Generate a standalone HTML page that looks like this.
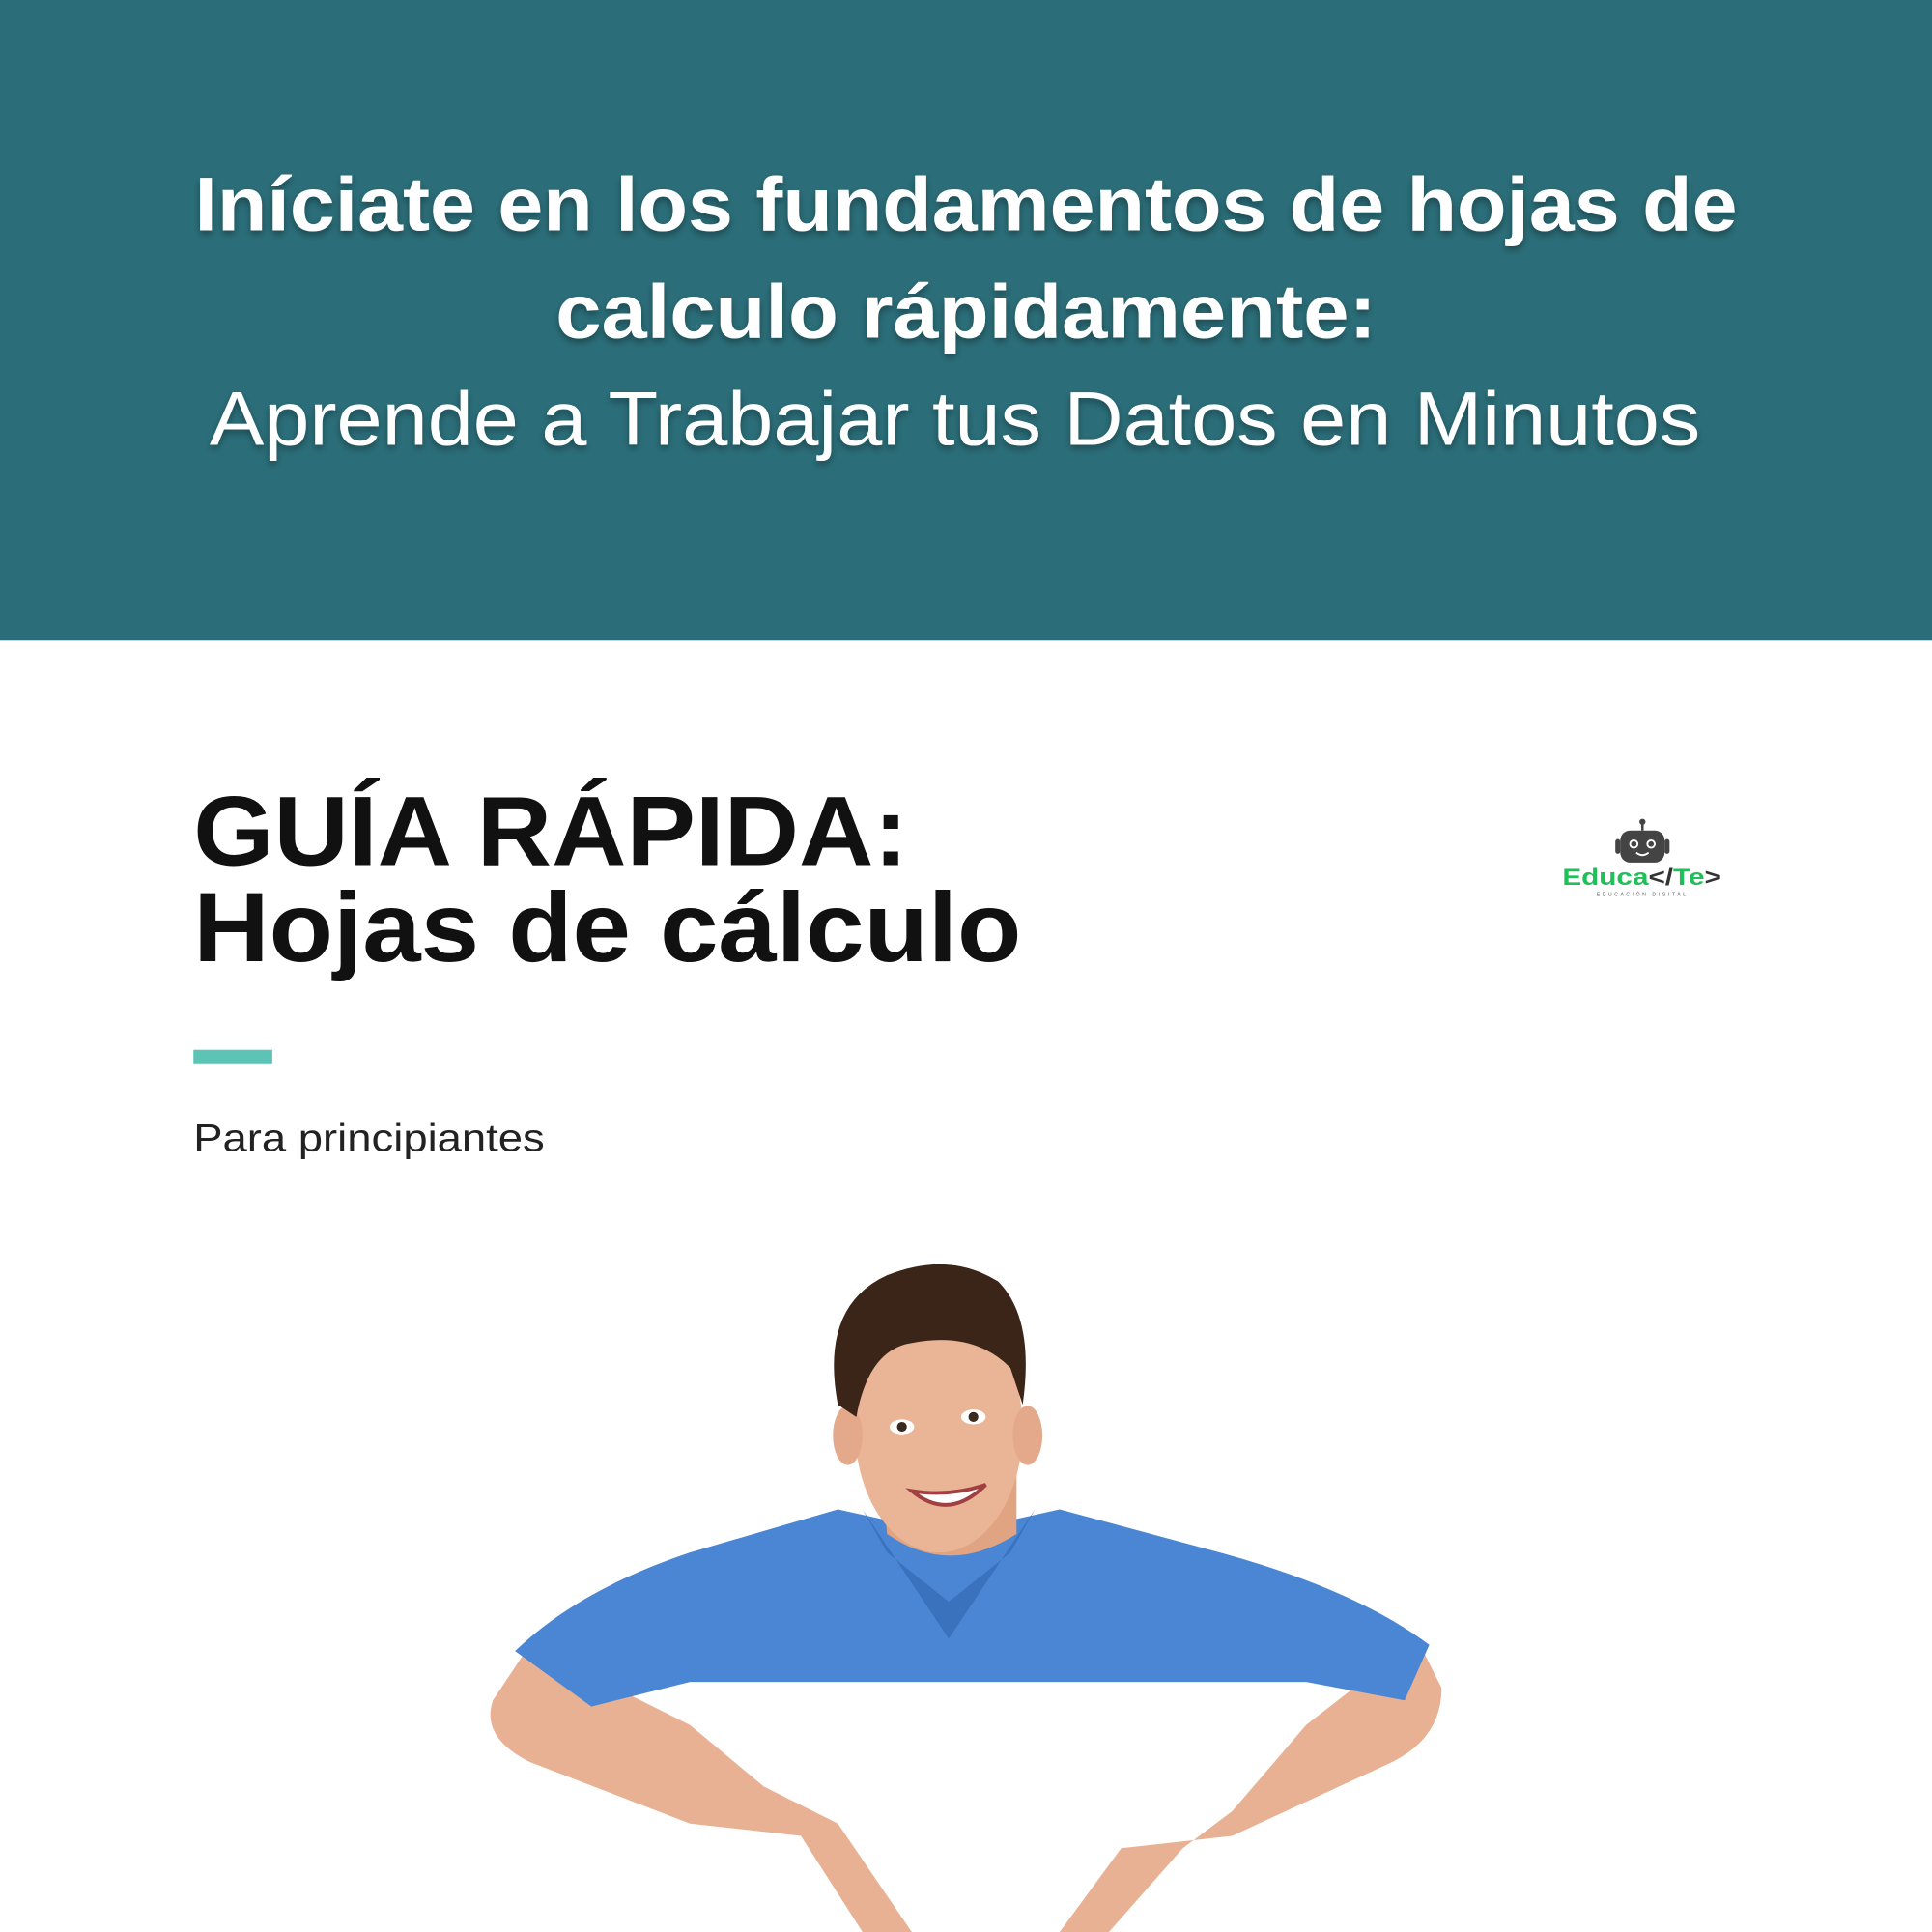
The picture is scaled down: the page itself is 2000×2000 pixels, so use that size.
<!DOCTYPE html>
<html><head><meta charset="utf-8"><style>
html,body{margin:0;padding:0;background:#fff}
svg{display:block}
</style></head><body>
<svg width="2000" height="2000" viewBox="0 0 1568 1568" xmlns="http://www.w3.org/2000/svg">
<defs><filter id="sh" x="-5%" y="-20%" width="110%" height="140%"><feDropShadow dx="0" dy="3" stdDeviation="3" flood-color="#000" flood-opacity="0.35"/></filter></defs>
<rect x="0" y="0" width="1568" height="520" fill="#2b6e79"/>
<g font-family="'Liberation Sans',sans-serif" fill="#fff" filter="url(#sh)">
<text x="158" y="187" font-size="62" font-weight="bold" textLength="1252" lengthAdjust="spacingAndGlyphs">Iníciate en los fundamentos de hojas de</text>
<text x="451" y="274" font-size="62" font-weight="bold" textLength="666" lengthAdjust="spacingAndGlyphs">calculo rápidamente:</text>
<text x="170" y="361" font-size="62" textLength="1210" lengthAdjust="spacingAndGlyphs">Aprende a Trabajar tus Datos en Minutos</text>
</g>
<g font-family="'Liberation Sans',sans-serif" fill="#111" font-weight="bold">
<text x="157" y="702" font-size="80" textLength="580" lengthAdjust="spacingAndGlyphs">GUÍA RÁPIDA:</text>
<text x="157" y="780" font-size="80" textLength="672" lengthAdjust="spacingAndGlyphs">Hojas de cálculo</text>
</g>
<rect x="157" y="852" width="64" height="11" fill="#5bc4b5"/>
<text x="157" y="934" font-family="'Liberation Sans',sans-serif" font-size="31" fill="#222" textLength="285" lengthAdjust="spacingAndGlyphs">Para principiantes</text>
<g>
<rect x="1315" y="674" width="36" height="26" rx="8" fill="#444"/>
<rect x="1311" y="681" width="4" height="12" rx="2" fill="#444"/>
<rect x="1351" y="681" width="4" height="12" rx="2" fill="#444"/>
<line x1="1333" y1="674" x2="1333" y2="668" stroke="#444" stroke-width="2"/>
<circle cx="1333" cy="667" r="2.5" fill="#444"/>
<circle cx="1326" cy="685" r="3" fill="none" stroke="#fff" stroke-width="1.5"/>
<circle cx="1340" cy="685" r="3" fill="none" stroke="#fff" stroke-width="1.5"/>
<path d="M1328 692 q5 4 10 0" stroke="#fff" stroke-width="1.5" fill="none"/>
<text x="1268" y="718" font-family="'Liberation Sans',sans-serif" font-weight="bold" font-size="19" textLength="129" lengthAdjust="spacingAndGlyphs"><tspan fill="#1fbf5a">Educa</tspan><tspan fill="#333">&lt;/</tspan><tspan fill="#1fbf5a">Te</tspan><tspan fill="#333">&gt;</tspan></text>
<text x="1333" y="727" font-family="'Liberation Sans',sans-serif" font-size="4" fill="#555" text-anchor="middle" letter-spacing="2">EDUCACIÓN DIGITAL</text>
</g>
<g>
<path d="M430 1335 L400 1380 Q390 1410 430 1430 L560 1480 L650 1490 L700 1568 L740 1568 L680 1480 L620 1450 L560 1400 Z" fill="#e8b194"/>
<path d="M1150 1330 L1170 1370 Q1170 1410 1130 1430 L1000 1490 L910 1500 L860 1568 L900 1568 L960 1500 L1000 1470 L1060 1400 Z" fill="#e8b194"/>
<path d="M418 1340 Q470 1290 560 1260 L680 1225 L770 1245 L860 1225 L990 1260 Q1100 1290 1160 1335 L1140 1380 L1060 1365 L560 1365 L480 1385 Z" fill="#4a86d4"/>
<path d="M700 1225 L770 1330 L840 1225 L820 1260 L770 1300 L720 1260 Z" fill="#3a72bd"/>
<path d="M715 1190 L720 1245 Q770 1280 825 1245 L825 1190 Z" fill="#e0a483"/>
<ellipse cx="762" cy="1160" rx="68" ry="100" fill="#eab596"/>
<ellipse cx="688" cy="1165" rx="12" ry="24" fill="#e3a98a"/>
<ellipse cx="834" cy="1165" rx="12" ry="24" fill="#e3a98a"/>
<path d="M680 1140 Q665 1060 720 1035 Q770 1015 810 1040 Q840 1070 830 1140 L820 1110 Q790 1080 740 1090 Q705 1095 695 1150 Z" fill="#3b2418"/>
<ellipse cx="732" cy="1158" rx="10" ry="6" fill="#fff"/><circle cx="732" cy="1158" r="4" fill="#3a2a20"/>
<ellipse cx="790" cy="1150" rx="10" ry="6" fill="#fff"/><circle cx="790" cy="1150" r="4" fill="#3a2a20"/>
<path d="M740 1210 Q770 1235 800 1205 Q770 1215 740 1210 Z" fill="#fff" stroke="#a04040" stroke-width="3"/>
</g>
</svg>
</body></html>
